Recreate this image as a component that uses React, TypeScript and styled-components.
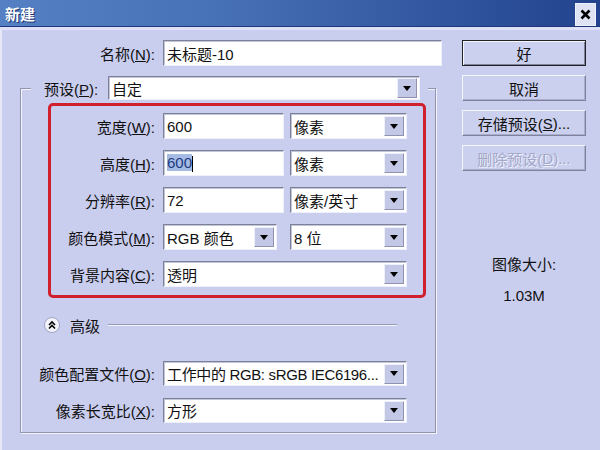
import React from "react";
import styled, { createGlobalStyle } from "styled-components";

const GlobalStyle = createGlobalStyle`
  html, body {
    margin: 0;
    padding: 0;
  }
  body {
    width: 600px;
    height: 450px;
    overflow: hidden;
    background: #c9cdee;
    font-family: "Liberation Sans", "Noto Sans CJK SC", sans-serif;
    font-size: 15px;
    color: #111;
  }
`;

const Window = styled.div`
  width: 600px;
  height: 450px;
  display: flex;
  flex-direction: column;
  background: #c9cdee;
`;

const TitleBar = styled.div`
  height: 27px;
  flex-shrink: 0;
  box-sizing: border-box;
  display: flex;
  align-items: center;
  justify-content: space-between;
  padding: 0 4px 0 5px;
  background: linear-gradient(to right, #5580c3 0%, #4872b7 35%, #3459a2 70%, #22428e 100%);
  border-bottom: 1px solid #1d3778;
`;

const Title = styled.div`
  color: #fff;
  font-family: "Noto Sans CJK SC", sans-serif;
  font-weight: bold;
  font-size: 15px;
  text-shadow: 1px 1px 0 #1c3270;
`;

const CloseButton = styled.div`
  width: 21px;
  height: 23px;
  margin-top: 2px;
  box-sizing: border-box;
  background: #dfe2f3;
  border: 1px solid #eef0fb;
  display: flex;
  align-items: center;
  justify-content: center;
`;

const Band = styled.div`
  height: 3px;
  flex-shrink: 0;
  background: #dde0f6;
`;

const Body = styled.div`
  flex: 1;
  display: flex;
  padding-top: 10px;
  box-shadow: inset 2px 0 0 #e6e8f8;
`;

const Main = styled.div`
  width: 448px;
  display: flex;
  flex-direction: column;
`;

const Row = styled.div`
  display: flex;
  align-items: center;
  height: ${(p: { $h?: number }) => p.$h ?? 26}px;
`;

const Label = styled.div<{ $w: number; $left?: boolean }>`
  width: ${(p) => p.$w}px;
  margin-right: 8px;
  text-align: ${(p) => (p.$left ? "left" : "right")};
  white-space: nowrap;
`;

const Field = styled.div<{ $w: number; $h?: number }>`
  width: ${(p) => p.$w}px;
  height: ${(p) => p.$h ?? 26}px;
  box-sizing: border-box;
  background: #fff;
  border: 1px solid;
  border-color: #7d8197 #eef0fb #eef0fb #7d8197;
  box-shadow: inset 1px 1px 0 #c3c6d8;
  display: flex;
  align-items: center;
  padding: 2px 2px 2px 3px;
  white-space: nowrap;
`;

const FieldText = styled.span<{ $tight?: boolean }>`
  flex: 1;
  overflow: hidden;
  letter-spacing: ${(p) => (p.$tight ? "-0.35px" : "normal")};
`;

const Selected = styled.span`
  background: #a5bbe4;
  color: #1d3a80;
`;

const Caret = styled.span`
  display: inline-block;
  width: 0;
  height: 16px;
  border-left: 1px solid #000;
  vertical-align: middle;
`;

const ArrowBox = styled.div`
  width: 20px;
  height: 20px;
  flex-shrink: 0;
  box-sizing: border-box;
  background: #c3c8e6;
  border: 1px solid;
  border-color: #eef0fb #8e92ae #8e92ae #eef0fb;
  display: flex;
  align-items: center;
  justify-content: center;

  &::after {
    content: "";
    border-left: 4px solid transparent;
    border-right: 4px solid transparent;
    border-top: 5px solid #000;
  }
`;

const Fieldset = styled.fieldset`
  margin: 10px 0 0 20px;
  width: 416px;
  box-sizing: border-box;
  min-width: 0;
  padding: 0 0 9px 0;
  border: 1px solid #9094b1;
  box-shadow: inset 1px 1px 0 #f3f4fc, 1px 1px 0 #f3f4fc;
`;

const Legend = styled.legend`
  margin-left: 10px;
  padding: 0 8px 0 13px;
  background: #c9cdee;
  display: flex;
  align-items: center;
  height: 24px;
`;

const RedBox = styled.div`
  margin: 3px 0 0 27px;
  width: 378px;
  box-sizing: border-box;
  border: 3px solid #d0202e;
  border-radius: 5px;
  padding: 7px 0 8px 0;
  display: flex;
  flex-direction: column;
  gap: 11px;
`;

const Gap = styled.div<{ $w: number }>`
  width: ${(p) => p.$w}px;
  flex-shrink: 0;
`;

const AdvancedRow = styled.div`
  margin: 19px 38px 0 23px;
  height: 16px;
  display: flex;
  align-items: center;
`;

const RoundIcon = styled.div`
  width: 16px;
  height: 16px;
  box-sizing: border-box;
  border-radius: 50%;
  background: #f2f3fb;
  border: 1px solid #a2a6c2;
  display: flex;
  align-items: center;
  justify-content: center;
`;

const AdvancedText = styled.span`
  margin-left: 10px;
`;

const Rule = styled.div`
  flex: 1;
  margin-left: 8px;
  border-top: 1px solid #9599b5;
  border-bottom: 1px solid #f3f4fc;
`;

const LowerRow = styled(Row)<{ $top: number }>`
  margin-top: ${(p) => p.$top}px;
`;

const Side = styled.div`
  padding-left: 14px;
  display: flex;
  flex-direction: column;
`;

const Button = styled.div<{ $default?: boolean; $disabled?: boolean }>`
  width: 124px;
  height: 26px;
  margin-bottom: 9px;
  box-sizing: border-box;
  background: #cbd0ef;
  display: flex;
  align-items: center;
  justify-content: center;
  white-space: nowrap;
  border: 1px solid;
  border-color: ${(p) => (p.$default ? "#222 #222 #222 #222" : "#f4f5fd #7e829e #7e829e #f4f5fd")};
  box-shadow: ${(p) =>
    p.$default ? "inset 1px 1px 0 #f4f5fd, inset -1px -1px 0 #7e829e" : "inset -1px -1px 0 #aaaecb"};
  color: ${(p) => (p.$disabled ? "#a3a7c8" : "#111")};
  text-shadow: ${(p) => (p.$disabled ? "1px 1px 0 #eef0fb" : "none")};
`;

const SizeInfo = styled.div`
  width: 124px;
  margin-top: 75px;
  text-align: center;
  line-height: 20px;
`;

const SizeValue = styled.div`
  margin-top: 11px;
`;

function Select({ w, h, text, tight }: { w: number; h?: number; text: string; tight?: boolean }) {
  return (
    <Field $w={w} $h={h}>
      <FieldText $tight={tight}>{text}</FieldText>
      <ArrowBox />
    </Field>
  );
}

export default function App() {
  return (
    <Window>
      <GlobalStyle />
      <TitleBar>
        <Title>新建</Title>
        <CloseButton>
          <svg width="11" height="11" viewBox="0 0 11 11">
            <path d="M1.5 1.5 L9.5 9.5 M9.5 1.5 L1.5 9.5" stroke="#000" strokeWidth="2.6" />
          </svg>
        </CloseButton>
      </TitleBar>
      <Band />
      <Body>
        <Main>
          <Row>
            <Label $w={155}>
              名称(<u>N</u>):
            </Label>
            <Field $w={279}>
              <FieldText>未标题-10</FieldText>
            </Field>
          </Row>

          <Fieldset>
            <Legend>
              <Label $w={56} $left>
                预设(<u>P</u>):
              </Label>
              <Select w={312} h={24} text="自定" />
            </Legend>

            <RedBox>
              <Row>
                <Label $w={104}>
                  宽度(<u>W</u>):
                </Label>
                <Field $w={121}>
                  <FieldText>600</FieldText>
                </Field>
                <Gap $w={6} />
                <Select w={117} text="像素" />
              </Row>
              <Row>
                <Label $w={104}>
                  高度(<u>H</u>):
                </Label>
                <Field $w={121}>
                  <FieldText>
                    <Selected>600</Selected>
                    <Caret />
                  </FieldText>
                </Field>
                <Gap $w={6} />
                <Select w={117} text="像素" />
              </Row>
              <Row>
                <Label $w={104}>
                  分辨率(<u>R</u>):
                </Label>
                <Field $w={121}>
                  <FieldText>72</FieldText>
                </Field>
                <Gap $w={6} />
                <Select w={117} text="像素/英寸" />
              </Row>
              <Row>
                <Label $w={104}>
                  颜色模式(<u>M</u>):
                </Label>
                <Select w={114} text="RGB 颜色" />
                <Gap $w={13} />
                <Select w={117} text="8 位" />
              </Row>
              <Row>
                <Label $w={104}>
                  背景内容(<u>C</u>):
                </Label>
                <Select w={244} text="透明" />
              </Row>
            </RedBox>

            <AdvancedRow>
              <RoundIcon>
                <svg width="10" height="10" viewBox="0 0 10 10">
                  <path
                    d="M2 5 L5 2 L8 5 M2 8.5 L5 5.5 L8 8.5"
                    fill="none"
                    stroke="#000"
                    strokeWidth="1.6"
                  />
                </svg>
              </RoundIcon>
              <AdvancedText>高级</AdvancedText>
              <Rule />
            </AdvancedRow>

            <LowerRow $top={28} $h={25}>
              <Label $w={134}>
                颜色配置文件(<u>O</u>):
              </Label>
              <Select w={244} h={25} text="工作中的 RGB: sRGB IEC6196..." tight />
            </LowerRow>
            <LowerRow $top={12} $h={25}>
              <Label $w={134}>
                像素长宽比(<u>X</u>):
              </Label>
              <Select w={244} h={25} text="方形" />
            </LowerRow>
          </Fieldset>
        </Main>

        <Side>
          <Button $default>好</Button>
          <Button>取消</Button>
          <Button>
            存储预设(<u>S</u>)...
          </Button>
          <Button $disabled>
            删除预设(<u>D</u>)...
          </Button>
          <SizeInfo>
            图像大小:
            <SizeValue>1.03M</SizeValue>
          </SizeInfo>
        </Side>
      </Body>
    </Window>
  );
}
